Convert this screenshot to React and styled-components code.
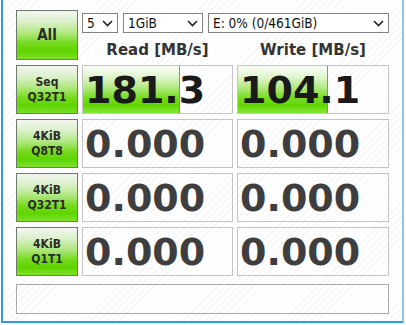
import React from 'react';
import styled, { createGlobalStyle } from 'styled-components';

const GlobalStyle = createGlobalStyle`
  html, body {
    margin: 0;
    padding: 0;
    background: #ffffff;
  }
  body {
    font-family: "DejaVu Sans", Verdana, sans-serif;
  }
`;

const greenGradient = `linear-gradient(to bottom,
  #f3f5f0 0%, #dcf0cc 22%, #b2e882 45%, #74da1c 68%, #60d400 84%, #7ae22c 100%)`;

const barGradient = `linear-gradient(to bottom,
  #fbfdf8 0%, #e2f6d2 22%, #b4ea84 45%, #76dc1e 68%, #62d602 84%, #86e83a 100%)`;

const Window = styled.div`
  box-sizing: border-box;
  width: 403px;
  height: 323px;
  margin-left: 1px;
  padding: 10px 11px 0 13px;
  border-left: 2px solid #3399e6;
  border-right: 2px solid #8ec5ef;
  border-bottom: 2px solid #3399e6;
  background: repeating-linear-gradient(135deg, #ffffff 0 4px, #f6f6f6 4px 5px);
`;

const Board = styled.div`
  display: grid;
  grid-template-columns: 62px 151px 152px;
  grid-template-rows: 50px repeat(4, 49px);
  column-gap: 4px;
  row-gap: 5px;
`;

const TestButton = styled.div`
  box-sizing: border-box;
  display: flex;
  align-items: center;
  justify-content: center;
  text-align: center;
  border: 1px solid #6f7a6a;
  background: ${greenGradient};
  color: #2b2b2b;
  font-family: "DejaVu Sans Condensed", "DejaVu Sans", sans-serif;
  font-stretch: condensed;
  font-weight: bold;
  font-size: ${(p) => (p.$big ? '15px' : '12px')};
  line-height: 15px;
`;

const Controls = styled.div`
  grid-column: 2 / 4;
  display: flex;
  flex-direction: column;
  padding-top: 3px;
`;

const DropdownRow = styled.div`
  display: flex;
  gap: 5px;
`;

const Dropdown = styled.div`
  box-sizing: border-box;
  width: ${(p) => p.$width || 'auto'};
  flex: ${(p) => (p.$width ? 'none' : '1')};
  height: 20px;
  display: flex;
  align-items: center;
  justify-content: space-between;
  padding: 0 4px 0 4px;
  border: 1px solid #828282;
  background: #ffffff;
  color: #111;
  font-family: "DejaVu Sans Condensed", "DejaVu Sans", sans-serif;
  font-stretch: condensed;
  font-size: 13.5px;
`;

const Headers = styled.div`
  display: grid;
  grid-template-columns: 151px 152px;
  column-gap: 4px;
  padding-top: 8px;
`;

const Header = styled.div`
  text-align: center;
  font-weight: bold;
  font-size: 15px;
  line-height: 18px;
  color: #333333;
`;

const ValueCell = styled.div`
  box-sizing: border-box;
  display: grid;
  border: 1px solid #c4c4c4;
  overflow: hidden;
`;

const Fill = styled.div`
  grid-area: 1 / 1;
  box-sizing: border-box;
  background: ${barGradient};
  border-right: 1px solid #7c9a6c;
`;

const Value = styled.div`
  grid-area: 1 / 1;
  align-self: center;
  padding-left: 2px;
  font-weight: bold;
  font-size: 38px;
  line-height: 1;
  color: ${(p) => (p.$zero ? '#3e3e3e' : '#1a1a1a')};
`;

const StatusBox = styled.div`
  box-sizing: border-box;
  width: 373px;
  height: 30px;
  margin-top: 8px;
  border: 1px solid #a8a8a8;
`;

function Chevron() {
  return (
    <svg width="11" height="7" viewBox="0 0 11 7">
      <polyline points="1,1 5.5,5.5 10,1" fill="none" stroke="#222" strokeWidth="1.6" />
    </svg>
  );
}

function Result({ value, fill }) {
  const zero = Number(value) === 0;
  return (
    <ValueCell>
      {fill > 0 && <Fill style={{ width: `${fill}%` }} />}
      <Value $zero={zero}>{value}</Value>
    </ValueCell>
  );
}

const tests = [
  { label: ['Seq', 'Q32T1'], read: '181.3', readFill: 65, write: '104.1', writeFill: 60 },
  { label: ['4KiB', 'Q8T8'], read: '0.000', readFill: 0, write: '0.000', writeFill: 0 },
  { label: ['4KiB', 'Q32T1'], read: '0.000', readFill: 0, write: '0.000', writeFill: 0 },
  { label: ['4KiB', 'Q1T1'], read: '0.000', readFill: 0, write: '0.000', writeFill: 0 },
];

export default function App() {
  return (
    <>
      <GlobalStyle />
      <Window>
        <Board>
          <TestButton $big>All</TestButton>
          <Controls>
            <DropdownRow>
              <Dropdown $width="36px">5<Chevron /></Dropdown>
              <Dropdown $width="80px">1GiB<Chevron /></Dropdown>
              <Dropdown>E: 0% (0/461GiB)<Chevron /></Dropdown>
            </DropdownRow>
            <Headers>
              <Header>Read [MB/s]</Header>
              <Header>Write [MB/s]</Header>
            </Headers>
          </Controls>
          {tests.map((t, i) => (
            <React.Fragment key={i}>
              <TestButton>
                {t.label[0]}
                <br />
                {t.label[1]}
              </TestButton>
              <Result value={t.read} fill={t.readFill} />
              <Result value={t.write} fill={t.writeFill} />
            </React.Fragment>
          ))}
        </Board>
        <StatusBox />
      </Window>
    </>
  );
}
